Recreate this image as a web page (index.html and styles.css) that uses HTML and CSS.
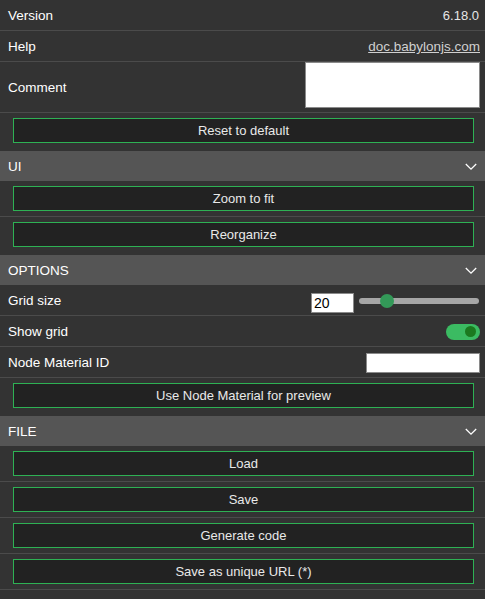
FILE: index.html
```
<!DOCTYPE html>
<html>
<head>
<meta charset="utf-8">
<link rel="stylesheet" href="styles.css">
</head>
<body>
<div class="panel">
  <div class="row"><span class="label">Version</span><span class="value">6.18.0</span></div>
  <div class="row"><span class="label">Help</span><a class="link" href="#">doc.babylonjs.com</a></div>
  <div class="row row-tall"><span class="label">Comment</span><textarea class="comment"></textarea></div>
  <div class="btnline last"><button class="btn">Reset to default</button></div>

  <div class="section">
    <div class="header"><span>UI</span><svg class="chev" width="12" height="8" viewBox="0 0 12 8"><polyline points="0.8,1 6,6.2 11.2,1" fill="none" stroke="#fff" stroke-width="1.3"/></svg></div>
    <div class="btnline"><button class="btn">Zoom to fit</button></div>
    <div class="btnline last"><button class="btn">Reorganize</button></div>
  </div>

  <div class="section">
    <div class="header"><span>OPTIONS</span><svg class="chev" width="12" height="8" viewBox="0 0 12 8"><polyline points="0.8,1 6,6.2 11.2,1" fill="none" stroke="#fff" stroke-width="1.3"/></svg></div>
    <div class="row">
      <span class="label">Grid size</span>
      <div class="slider-group">
        <input class="num" type="text" value="20">
        <div class="track"><div class="track-fill"></div><div class="thumb"></div></div>
      </div>
    </div>
    <div class="row">
      <span class="label">Show grid</span>
      <div class="toggle"><div class="knob"></div></div>
    </div>
    <div class="row">
      <span class="label">Node Material ID</span>
      <input class="idinput" type="text" value="">
    </div>
    <div class="btnline last"><button class="btn">Use Node Material for preview</button></div>
  </div>

  <div class="section">
    <div class="header"><span>FILE</span><svg class="chev" width="12" height="8" viewBox="0 0 12 8"><polyline points="0.8,1 6,6.2 11.2,1" fill="none" stroke="#fff" stroke-width="1.3"/></svg></div>
    <div class="btnline"><button class="btn">Load</button></div>
    <div class="btnline"><button class="btn">Save</button></div>
    <div class="btnline"><button class="btn">Generate code</button></div>
    <div class="btnline"><button class="btn">Save as unique URL (*)</button></div>
  </div>
</div>
</body>
</html>
```

FILE: styles.css
```
html, body {
  margin: 0;
  padding: 0;
  background: #333333;
}
body {
  font-family: "Liberation Sans", Arial, sans-serif;
  color: #ffffff;
  font-size: 13.5px;
}
.panel {
  width: 485px;
  display: flex;
  flex-direction: column;
}
.row {
  height: 30px;
  box-sizing: content-box;
  display: flex;
  align-items: center;
  justify-content: space-between;
  padding: 1px 5px 0 8px;
  height: 29px;
  border-bottom: 1px solid #4b4b4b;
}
.row-tall {
  height: 50px;
  padding-top: 0;
  align-items: flex-start;
}
.row-tall .label {
  align-self: center;
}
.value {
  color: #e6e6e6;
  font-size: 13px;
  padding-right: 1px;
}
.link {
  color: #d0d0d0;
  font-size: 13.5px;
  text-decoration: underline;
}
.comment {
  width: 175px;
  height: 46px;
  box-sizing: border-box;
  border: 1px solid #8a8a8a;
  background: #ffffff;
  resize: none;
  margin: 0;
  padding: 2px;
}
.btnline {
  padding: 5px 11px 5px 13px;
  border-bottom: 1px solid #4b4b4b;
  display: flex;
}
.btnline.last {
  padding-bottom: 8px;
  border-bottom: none;
}
.btn {
  flex: 1;
  height: 25px;
  box-sizing: border-box;
  background: #222222;
  border: 1px solid #2eb154;
  color: #e9e9e9;
  font-family: "Liberation Sans", Arial, sans-serif;
  font-size: 13px;
  padding: 0;
  margin: 0;
}
.header {
  height: 30px;
  background: #555555;
  display: flex;
  align-items: center;
  justify-content: space-between;
  padding: 1px 8px 0 8px;
  box-sizing: border-box;
  font-size: 13.5px;
}
.chev {
  display: block;
}
.slider-group {
  display: flex;
  align-items: center;
  gap: 5px;
  padding-right: 1px;
}
.num {
  width: 43px;
  height: 20px;
  box-sizing: border-box;
  border: 1px solid #8a8a8a;
  margin: 5px 0 0 0;
  padding: 0 2px;
  font-family: "Liberation Sans", Arial, sans-serif;
  font-size: 14px;
  color: #000;
  background: #fff;
}
.track {
  width: 120px;
  height: 6px;
  border-radius: 3px;
  background: #a6a6a6;
  display: flex;
  align-items: center;
}
.track-fill {
  width: 21px;
}
.thumb {
  width: 14px;
  height: 14px;
  border-radius: 50%;
  background: #339958;
}
.toggle {
  width: 34px;
  height: 16px;
  border-radius: 8px;
  background: #3bbb62;
  display: flex;
  align-items: center;
  justify-content: flex-end;
  padding-right: 4px;
  box-sizing: border-box;
}
.knob {
  width: 11px;
  height: 11px;
  border-radius: 50%;
  background: #1b7a1f;
}
.idinput {
  width: 114px;
  height: 20px;
  box-sizing: border-box;
  border: 1px solid #8a8a8a;
  background: #fff;
  margin: 0;
  padding: 0 2px;
}
```
